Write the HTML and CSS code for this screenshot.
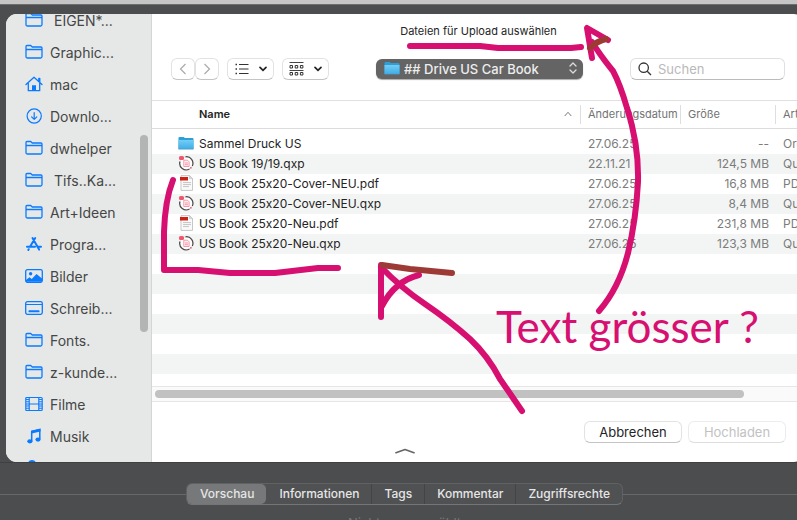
FILE: index.html
```html
<!DOCTYPE html>
<html lang="de">
<head>
<meta charset="utf-8">
<meta name="viewport" content="width=device-width, initial-scale=1">
<title>Dateien für Upload auswählen</title>
<link rel="stylesheet" href="styles.css">
</head>
<body>
<svg class="defs" aria-hidden="true">
  <linearGradient id="blue" x1="0" y1="0" x2="0" y2="1"><stop offset="0" stop-color="#74cdf6"/><stop offset="1" stop-color="#3fade6"/></linearGradient>
  <symbol id="folder" viewBox="0 0 18 16"><path d="M1 12.500v-10q0-1 1-1h3.600l1.800 1.500H16q1 0 1 1v8.500q0 1.500-1.500 1.500h-13Q1 14 1 12.500zM1 5.500h16" fill="none" stroke="#0a7aff" stroke-width="1.300"/></symbol>
  <symbol id="home" viewBox="0 0 18 16"><path d="M1 8.500 9 1.300l8 7.200M13.800 5.300V2.300h1v4M3.300 7.500v7.200h11.400V7.500" fill="none" stroke="#0a7aff" stroke-width="1.300" stroke-linecap="round" stroke-linejoin="round"/><path d="M7 9.300h4v5.400H7z" fill="#0a7aff"/></symbol>
  <symbol id="download" viewBox="0 0 18 16"><g fill="none" stroke="#0a7aff" stroke-width="1.200" stroke-linecap="round" stroke-linejoin="round"><circle cx="9.200" cy="8" r="7.100"/><path d="M9.200 4.700v6.600M6.600 8.800l2.600 2.600 2.600-2.600"/></g></symbol>
  <symbol id="apps" viewBox="0 0 18 16"><g fill="none" stroke="#0a7aff" stroke-width="2" stroke-linecap="round"><path d="M7.500 2l6.600 11.600M10.200 2 5.300 10.300M2 10.700h8M13.300 10.700H16M3.700 13.200l-.4.700"/></g></symbol>
  <symbol id="picture" viewBox="0 0 18 16"><rect x=".7" y="1.700" width="16.600" height="12.600" rx="1.700" fill="none" stroke="#0a7aff" stroke-width="1.300"/><circle cx="5.600" cy="5.700" r="1.700" fill="#0a7aff"/><path d="M1 12l3.500-2.700 2.200 1.600L11.500 6 17 10.500v3.300H1z" fill="#0a7aff"/></symbol>
  <symbol id="desktop" viewBox="0 0 18 16"><rect x=".7" y="1.700" width="16.600" height="12.600" rx="1.700" fill="none" stroke="#0a7aff" stroke-width="1.300"/><path d="M1 4.500h16" stroke="#0a7aff" stroke-width="1.200"/><rect x="3.500" y="10.300" width="11" height="2" rx=".6" fill="#0a7aff"/></symbol>
  <symbol id="film" viewBox="0 0 18 16"><path d="M.8 2.500q0-1 1-1h14.400q1 0 1 1v11q0 1-1 1H1.800q-1 0-1-1zM4.200 1.500v13M13.800 1.500v13M4.200 8h9.600" fill="none" stroke="#0a7aff" stroke-width="1.200"/><path d="M2.500 3v11M15.500 3v11" stroke="#0a7aff" stroke-width="2.800" stroke-dasharray="1 1.200"/></symbol>
  <symbol id="music" viewBox="0 0 18 16"><path d="M6.700 13V3.400L14.800 1.500V11" fill="none" stroke="#0a7aff" stroke-width="1.500"/><path d="M6.500 2.800 15.500.8v2.800l-9 2z" fill="#0a7aff"/><ellipse cx="4.900" cy="13.300" rx="2.600" ry="2.100" fill="#0a7aff"/><ellipse cx="13" cy="11.600" rx="2.600" ry="2.100" fill="#0a7aff"/></symbol>
  <symbol id="cloud" viewBox="0 0 18 16"><circle cx="7" cy="4" r="4" fill="#0a7aff"/></symbol>
  <symbol id="f-folder" viewBox="0 0 16 16"><path d="M.5 3q0-1 1-1h4l1.500 1h7.500q1 0 1 1v10h-15z" fill="#2e9fd6"/><path d="M.5 5h15v8.500q0 .5-.5.500H1q-.5 0-.5-.5z" fill="url(#blue)"/><path d="M.5 14.300h15" stroke="#4b93ba" stroke-width=".6"/></symbol>
  <symbol id="f-qxp" viewBox="0 0 16 16"><circle cx="8.300" cy="8.300" r="6.500" fill="#fff" stroke="#e3e3e3"/><path d="M7.500 1.800A6.500 6.500 0 0 1 14.300 11M11.500 14A6.500 6.500 0 0 1 2 6.500" fill="none" stroke="#4a4748" stroke-width="1.200"/><path d="M5.800 5.200h3.700l1.600 1.600v4.700H5.800zM7 8h2.900M7 9.700h2.900" fill="#fff1f3" stroke="#f58c9f" stroke-width=".9"/><rect x="1" y="1" width="5" height="4" rx="1.500" fill="#f0586f"/><circle cx="12.900" cy="12.800" r=".9" fill="#ef5670"/></symbol>
  <symbol id="f-pdf" viewBox="0 0 16 16"><path d="M3 .6h8.500l3 3v11.800H3z" fill="#fafafa" stroke="#b9b9b9" stroke-width=".8"/><path d="M11.500.6v3h3z" fill="#ddd" stroke="#b9b9b9" stroke-width=".5"/><path d="M2 2h8v3.500H2z" fill="#cf2013"/><path d="M5 7.600h8M5 9.600h8M5 11.600h6" stroke="#b5b5b5" stroke-width=".8"/></symbol>
</svg>

<div class="topstrip"></div>

<section class="dialog" aria-label="Dateien für Upload auswählen">
  <nav class="sidebar" aria-label="Favoriten">
    <ul class="places">
      <li><a class="place" href="#"><svg><use href="#folder"/></svg><span class="indent">EIGEN*...</span></a></li>
      <li><a class="place" href="#"><svg><use href="#folder"/></svg><span>Graphic...</span></a></li>
      <li><a class="place" href="#"><svg><use href="#home"/></svg><span>mac</span></a></li>
      <li><a class="place" href="#"><svg><use href="#download"/></svg><span>Downlo...</span></a></li>
      <li><a class="place" href="#"><svg><use href="#folder"/></svg><span>dwhelper</span></a></li>
      <li><a class="place" href="#"><svg><use href="#folder"/></svg><span class="indent">Tifs..Ka...</span></a></li>
      <li><a class="place" href="#"><svg><use href="#folder"/></svg><span>Art+Ideen</span></a></li>
      <li><a class="place" href="#"><svg><use href="#apps"/></svg><span>Progra...</span></a></li>
      <li><a class="place" href="#"><svg><use href="#picture"/></svg><span>Bilder</span></a></li>
      <li><a class="place" href="#"><svg><use href="#desktop"/></svg><span>Schreib...</span></a></li>
      <li><a class="place" href="#"><svg><use href="#folder"/></svg><span>Fonts.</span></a></li>
      <li><a class="place" href="#"><svg><use href="#folder"/></svg><span>z-kunde...</span></a></li>
      <li><a class="place" href="#"><svg><use href="#film"/></svg><span>Filme</span></a></li>
      <li><a class="place" href="#"><svg><use href="#music"/></svg><span>Musik</span></a></li>
      <li><a class="place" href="#" aria-label="Cloud"><svg><use href="#cloud"/></svg></a></li>
    </ul>
    <div class="side-thumb"></div>
  </nav>

  <div class="main">
    <h1 class="title">Dateien für Upload auswählen</h1>
    <div class="toolbar">
      <div class="history">
        <button class="btn arrow" type="button" aria-label="Zurück" disabled><svg width="8" height="12" viewBox="0 0 8 12"><path d="M6.500 1 1.500 6l5 5"/></svg></button>
        <button class="btn arrow" type="button" aria-label="Vorwärts" disabled><svg width="8" height="12" viewBox="0 0 8 12"><path d="M1.500 1l5 5-5 5"/></svg></button>
      </div>
      <button class="btn view" type="button" aria-label="Listendarstellung">
        <svg width="14" height="12" viewBox="0 0 14 12"><path d="M4 1.500h9.500M4 6h9.500M4 10.500h9.500" stroke="#333" stroke-width="1.200"/><path d="M.5 1.500H2M.5 6H2M.5 10.500H2" stroke="#333" stroke-width="1.500"/></svg>
        <svg width="8" height="6" viewBox="0 0 8 6"><path d="M1 1.300l3 3 3-3" fill="none" stroke="#222" stroke-width="1.700" stroke-linecap="round"/></svg>
      </button>
      <button class="btn view" type="button" aria-label="Gruppieren">
        <svg width="15" height="14" viewBox="0 0 15 14"><path d="M.5.500h14M.5 8.500h14" stroke="#444"/><path d="M1 3.500h2.500v2.500H1zM6.200 3.500h2.500v2.500H6.200zM11.400 3.500h2.500v2.500h-2.500zM1 10.500h2.500v2.500H1zM6.200 10.500h2.500v2.500H6.200zM11.400 10.500h2.500v2.500h-2.500z" fill="none" stroke="#333"/></svg>
        <svg width="8" height="6" viewBox="0 0 8 6"><path d="M1 1.300l3 3 3-3" fill="none" stroke="#222" stroke-width="1.700" stroke-linecap="round"/></svg>
      </button>
      <div class="location">
        <svg class="location-icon" width="16" height="16"><use href="#f-folder"/></svg>
        <select class="location-select" aria-label="Ordner"><option>## Drive US Car Book</option></select>
        <svg class="location-chevron" width="8" height="12" viewBox="0 0 8 12"><path d="M1 4l3-3 3 3M1 8l3 3 3-3" fill="none" stroke="#ddd" stroke-width="1.300" stroke-linecap="round" stroke-linejoin="round"/></svg>
      </div>
      <div class="search">
        <svg width="14" height="14" viewBox="0 0 14 14"><circle cx="5.700" cy="5.700" r="4.700"/><path d="M9.200 9.200l3.800 3.800"/></svg>
        <input class="search-input" type="search" placeholder="Suchen" aria-label="Suchen">
      </div>
    </div>

    <div class="files">
      <table class="list">
        <colgroup><col><col class="c-date"><col class="c-size"><col class="c-kind"></colgroup>
        <thead>
          <tr>
            <th class="name" scope="col"><div class="sorted">Name<svg width="8" height="6" viewBox="0 0 8 6"><path d="M.7 5 4 1.300 7.300 5" fill="none" stroke="#777"/></svg></div></th>
            <th scope="col">Änderungsdatum</th>
            <th scope="col">Größe</th>
            <th scope="col">Art</th>
          </tr>
        </thead>
        <tbody>
          <tr><td class="name"><div class="file"><svg><use href="#f-folder"/></svg>Sammel Druck US</div></td><td>27.06.25</td><td class="size">--</td><td>Ordner</td></tr>
          <tr><td class="name"><div class="file"><svg><use href="#f-qxp"/></svg>US Book 19/19.qxp</div></td><td>22.11.21</td><td class="size">124,5 MB</td><td>Quark</td></tr>
          <tr><td class="name"><div class="file"><svg><use href="#f-pdf"/></svg>US Book 25x20-Cover-NEU.pdf</div></td><td>27.06.25</td><td class="size">16,8 MB</td><td>PDF</td></tr>
          <tr><td class="name"><div class="file"><svg><use href="#f-qxp"/></svg>US Book 25x20-Cover-NEU.qxp</div></td><td>27.06.25</td><td class="size">8,4 MB</td><td>Quark</td></tr>
          <tr><td class="name"><div class="file"><svg><use href="#f-pdf"/></svg>US Book 25x20-Neu.pdf</div></td><td>27.06.25</td><td class="size">231,8 MB</td><td>PDF</td></tr>
          <tr><td class="name"><div class="file"><svg><use href="#f-qxp"/></svg>US Book 25x20-Neu.qxp</div></td><td>27.06.25</td><td class="size">123,3 MB</td><td>Quark</td></tr>
        </tbody>
      </table>
    </div>
    <div class="hscroll"><div class="hthumb"></div></div>
    <div class="actions">
      <button class="btn action" type="button">Abbrechen</button>
      <button class="btn action" type="button" disabled>Hochladen</button>
    </div>
  </div>
  <svg class="grip" width="20" height="6" viewBox="0 0 20 6"><path d="M1 4.700 10 1.500l9 3.200" fill="none" stroke="#666" stroke-width="1.700" stroke-linecap="round" stroke-linejoin="round"/></svg>
</section>

<footer class="inspector">
  <div class="tabs-row">
    <div class="tabs" role="tablist">
      <button class="tab selected" type="button" role="tab" aria-selected="true">Vorschau</button>
      <button class="tab" type="button" role="tab">Informationen</button>
      <button class="tab" type="button" role="tab">Tags</button>
      <button class="tab" type="button" role="tab">Kommentar</button>
      <button class="tab" type="button" role="tab">Zugriffsrechte</button>
    </div>
  </div>
  <p class="status">Nichts ausgewählt</p>
</footer>

<svg class="notes" width="797" height="520" viewBox="0 0 797 520">
  <g class="pen">
    <path d="M410 46H480L498 48H571L581 47"/>
    <path d="M608 40 587 28 592 58"/>
    <path d="M592 42Q600 55 613 71Q620 84 627 108Q639 145 638 182Q636 220 628 253Q619 288 599 311"/>
    <path d="M173 180Q165 200 164 232V270L198 270 230 273H275L318 268H338"/>
    <path d="M381 265V317M382 306Q395 281 419 275M381 267Q400 287 425 304T470 339Q488 356 500 379L522 411"/>
  </g>
  <g class="pen brown">
    <path d="M590 48Q597 41 606 39"/>
    <path d="M382 265 410 269 452 273"/>
  </g>
  <text class="note" x="496" y="343">Text grösser ?</text>
</svg>
</body>
</html>
```
FILE: styles.css
```css
* { box-sizing: border-box; }

body {
  margin: 0;
  height: 100vh;
  display: flex;
  flex-direction: column;
  position: relative;
  overflow: hidden;
  background: #4c4d4f;
  color: #242424;
  font-family: Inter, "Liberation Sans", sans-serif;
  font-size: 12px;
  font-variant-ligatures: no-contextual;
}

button, input, select { font: inherit; color: inherit; }

.defs { position: absolute; width: 0; height: 0; }

.topstrip {
  flex: none;
  height: 14px;
  border-top: 4px solid #c5c5c5;
  box-shadow: inset 0 1px #6d6d6e;
}

/* The sheet runs slightly past the right edge of the window. */
.dialog {
  flex: 1;
  min-height: 0;
  display: flex;
  position: relative;
  margin: 0 -8px 0 6px;
  overflow: hidden;
  border-radius: 11px;
  background: #fff;
}

.sidebar {
  flex: none;
  width: 146px;
  position: relative;
  overflow: hidden;
  background: #e6e8e7;
  border-right: 1px solid #d4d5d5;
}

.places {
  list-style: none;
  margin: -10px 0 0;
  padding: 0 0 0 19px;
}

.place {
  display: flex;
  align-items: center;
  gap: 7px;
  height: 32px;
  color: #454646;
  font-size: 14px;
  text-decoration: none;
  white-space: nowrap;
}

.place svg { flex: none; width: 18px; height: 16px; }
.indent { padding-left: 4px; }

.side-thumb {
  position: absolute;
  top: 27%;
  right: 3px;
  width: 8px;
  height: 44%;
  border-radius: 4px;
  background: #b3b5b4;
}

.main {
  flex: 1;
  min-width: 0;
  display: flex;
  flex-direction: column;
}

.title {
  margin: 0;
  line-height: 34px;
  font-size: 11px;
  font-weight: 400;
  text-align: center;
}

.toolbar {
  display: flex;
  align-items: center;
  gap: 8px;
  height: 53px;
  padding: 0 20px 10px 19px;
  border-bottom: 1px solid #e0e0e0;
}

.btn {
  display: flex;
  align-items: center;
  justify-content: center;
  height: 22px;
  padding: 0;
  border: 1px solid #e2e2e2;
  border-bottom-color: #c4c4c4;
  border-radius: 6px;
  background: #fff;
}

.history { display: flex; }
.arrow { width: 24px; }
.arrow svg { fill: none; stroke: #aaa; stroke-width: 1.2; }
.view { width: 47px; gap: 10px; }

.location {
  position: relative;
  flex: 0 1 207px;
  margin: 0 auto;
}

.location-select {
  display: block;
  appearance: none;
  width: 100%;
  height: 20px;
  padding: 0 20px 0 28px;
  border: 0;
  border-radius: 6px;
  background: #646464;
  box-shadow: 0 1px 1px #aaa;
  color: #ededed;
  font-size: 13px;
  font-weight: 500;
}

.location-icon { position: absolute; left: 8px; top: 1px; }
.location-chevron { position: absolute; right: 6px; top: 3px; }

.search {
  display: flex;
  align-items: center;
  gap: 6px;
  flex: 0 1 155px;
  min-width: 0;
  height: 22px;
  padding: 0 7px;
  border: 1px solid #e0e0e0;
  border-bottom-color: #bbb;
  border-radius: 6px;
}

.search svg { flex: none; fill: none; stroke: #333; stroke-width: 1.3; }

.search-input {
  flex: 1;
  min-width: 0;
  padding: 0;
  border: 0;
  background: none;
  font-size: 13px;
}

.search-input::placeholder { color: #b9b9b9; opacity: 1; }

.files {
  flex: 1;
  min-height: 0;
  overflow: hidden;
  background: repeating-linear-gradient(#fff 0 20px, #f3f5f4 20px 40px) 0 33px no-repeat;
}

.list {
  width: 100%;
  table-layout: fixed;
  border-collapse: separate;
  border-spacing: 0;
}

.c-date { width: 100px; }
.c-size { width: 95px; }
.c-kind { width: 30px; }

.list th {
  height: 28px;
  padding: 0 0 2px 8px;
  border-bottom: 1px solid #dcdcdc;
  background: linear-gradient(#dedede, #dedede) 0 4px / 1px 19px no-repeat;
  color: #737373;
  font-size: 11px;
  font-weight: 400;
  text-align: left;
  white-space: nowrap;
}

.list th.name {
  padding: 0 8px 2px 47px;
  background: none;
  color: #242424;
  font-weight: 600;
}

.sorted {
  display: flex;
  align-items: center;
  justify-content: space-between;
}

.list tbody::before { content: ""; display: block; height: 5px; }

.list td {
  height: 20px;
  padding: 0 0 2px 8px;
  color: #7b7c7b;
  white-space: nowrap;
}

.list td.name { padding-left: 26px; color: #242424; }
.list td.size { padding: 0 6px 2px 0; text-align: right; }

.file { display: flex; align-items: center; gap: 5px; }
.file svg { flex: none; width: 16px; height: 16px; }

.hscroll {
  height: 16px;
  padding: 3px;
  border: solid #e6e6e6;
  border-width: 1px 0;
  background: #fafafa;
}

.hthumb {
  width: 91%;
  height: 8px;
  border-radius: 4px;
  background: #c1c1c1;
}

.actions {
  display: flex;
  justify-content: flex-end;
  gap: 6px;
  height: 60px;
  padding: 19px 19px 0 0;
}

.action { width: 98px; font-size: 13px; }
.action:disabled { color: #c2c2c2; border-color: #ececec; border-bottom-color: #ddd; }

.grip {
  position: absolute;
  left: 50%;
  bottom: 8px;
  margin-left: -11px;
}

.inspector {
  flex: none;
  height: 58px;
  padding-top: 20px;
  overflow: hidden;
  border-top: 1px solid #3f4041;
}

.tabs-row {
  display: flex;
  align-items: center;
  margin-right: -12px;
}

.tabs-row::before, .tabs-row::after {
  content: "";
  flex: 1;
  height: 1px;
  background: #68696a;
}

.tabs {
  display: flex;
  height: 22px;
  border: 1px solid #606162;
  border-bottom-color: #747576;
  border-radius: 6px;
  background: #505153;
}

.tab {
  padding: 0 12px 2px 13px;
  border: 0;
  background: none;
  color: #e6e6e6;
  font-size: 12px;
  font-weight: 500;
}

.tab + .tab + .tab { box-shadow: inset 1px 0 #434446; }
.selected { border-radius: 5px; background: #777879; }

.status {
  margin: 8px -12px 0 0;
  color: #77787a;
  line-height: 20px;
  font-size: 13px;
  text-align: center;
}

.notes {
  position: absolute;
  top: 0;
  left: 0;
  pointer-events: none;
}

.pen {
  fill: none;
  stroke: #d60f71;
  stroke-width: 6;
  stroke-linecap: round;
  stroke-linejoin: round;
}

.brown { stroke: #9e3a36; }

.note {
  fill: #d60f71;
  font-family: Lato, "Noto Sans", sans-serif;
  font-size: 44px;
}
```
